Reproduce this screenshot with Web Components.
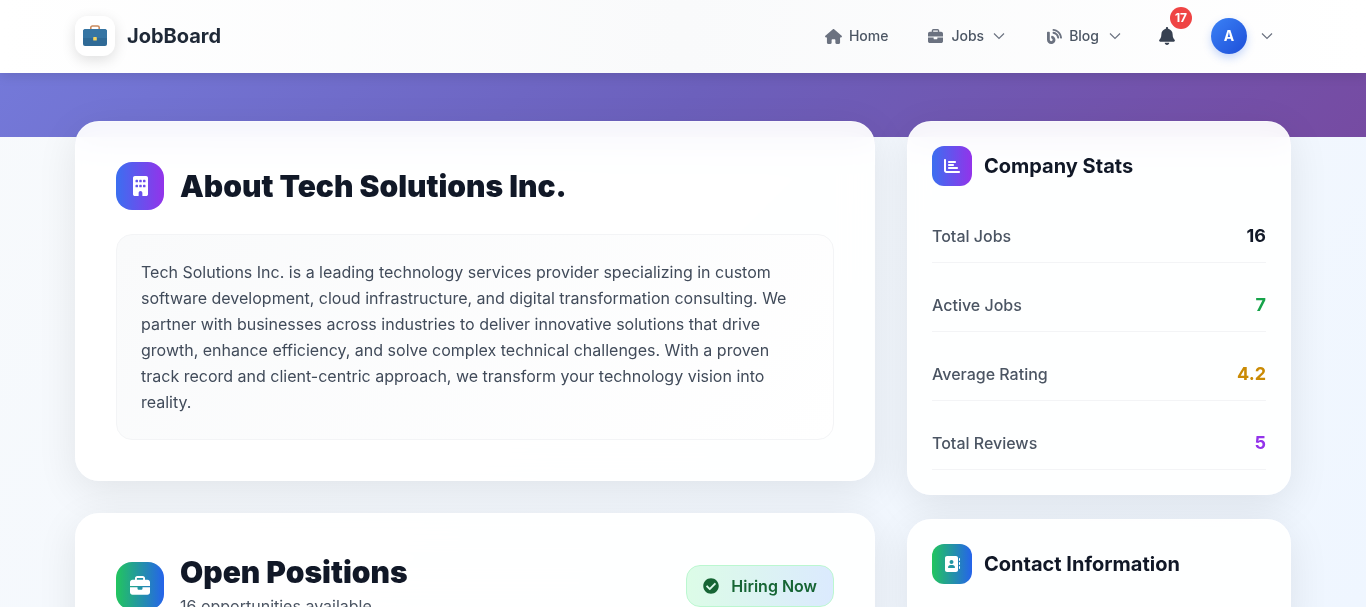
<!doctype html>
<html lang="en">
<head>
<meta charset="utf-8">
<title>About Tech Solutions Inc.</title>
<style>
  html, body { margin: 0; padding: 0; }
  html { height: 607px; overflow: hidden; }
  body {
    font-family: Inter, "Liberation Sans", sans-serif;
    background: linear-gradient(135deg, #f8fafc 0%, #eff6ff 100%);
    min-height: 607px;
    overflow: hidden;
  }
</style>
</head>
<body>
<top-nav></top-nav>
<hero-band></hero-band>
<page-main>
  <div slot="left">
    <info-card main>
      <card-head big icon="building" tone="purple" title-text="About Tech Solutions Inc."></card-head>
      <about-box>Tech Solutions Inc. is a leading technology services provider specializing in custom software development, cloud infrastructure, and digital transformation consulting. We partner with businesses across industries to deliver innovative solutions that drive growth, enhance efficiency, and solve complex technical challenges. With a proven track record and client-centric approach, we transform your technology vision into reality.</about-box>
    </info-card>
    <info-card main class="positions">
      <positions-head></positions-head>
    </info-card>
  </div>
  <div slot="right">
    <info-card>
      <card-head icon="chart" tone="purple" title-text="Company Stats"></card-head>
      <stat-row label="Total Jobs" value="16" color="#111827"></stat-row>
      <stat-row label="Active Jobs" value="7" color="#16a34a"></stat-row>
      <stat-row label="Average Rating" value="4.2" color="#ca8a04"></stat-row>
      <stat-row label="Total Reviews" value="5" color="#9333ea"></stat-row>
    </info-card>
    <info-card>
      <card-head icon="contact" tone="green" title-text="Contact Information"></card-head>
    </info-card>
  </div>
</page-main>

<script>
// font-awesome shapes, copied out as plain paths
const ICONS = {
  home: ['0 0 576 512', 'M575.8 255.5c0 18-15 32.1-32 32.1h-32l.7 160.2c0 2.7-.2 5.4-.5 8.1V472c0 22.1-17.9 40-40 40H456c-1.1 0-2.2 0-3.3-.1c-1.4 .1-2.8 .1-4.2 .1H416 392c-22.1 0-40-17.9-40-40V448 384c0-17.7-14.3-32-32-32H256c-17.7 0-32 14.3-32 32v64 24c0 22.1-17.9 40-40 40H160 128.1c-1.5 0-3-.1-4.5-.2c-1.2 .1-2.4 .2-3.6 .2H104c-22.1 0-40-17.9-40-40V360c0-.9 0-1.9 .1-2.8V287.6H32c-18 0-32-14-32-32.1c0-9 3-17 10-24L266.4 8c7-7 15-8 22-8s15 2 21 7L564.8 231.5c8 7 12 15 11 24z'],
  briefcase: ['0 0 512 512', 'M184 48H328c4.4 0 8 3.6 8 8V96H176V56c0-4.4 3.6-8 8-8zm-56 8V96H64C28.7 96 0 124.7 0 160v96H192 320 512V160c0-35.3-28.7-64-64-64H384V56c0-30.9-25.1-56-56-56H184c-30.9 0-56 25.1-56 56zM512 288H320v32c0 17.7-14.3 32-32 32H224c-17.7 0-32-14.3-32-32V288H0V416c0 35.3 28.7 64 64 64H448c35.3 0 64-28.7 64-64V288z'],
  blog: ['0 0 512 512', 'M172.2 226.8c-14.6-2.9-28.2 8.9-28.2 23.8V301c0 10.2 7.1 18.4 16.7 22 18.2 6.8 31.3 24.4 31.3 45 0 26.5-21.5 48-48 48s-48-21.5-48-48V120c0-13.3-10.7-24-24-24H24c-13.3 0-24 10.7-24 24v248c0 89.5 82.1 160.2 175 140.7 54.4-11.4 98.3-55.4 109.7-109.7 17.4-82.9-37-157.2-112.5-172.2zM209 0c-9.2-.5-17 6.8-17 16v31.6c0 8.5 6.6 15.5 15 15.9 129.4 7 233.4 112 240.9 241.5.5 8.4 7.5 15 15.9 15h32.1c9.2 0 16.5-7.8 16-17C503.4 139.8 372.2 8.6 209 0zm.3 96c-9.3-.7-17.3 6.7-17.3 16.1v32.1c0 8.4 6.5 15.3 14.8 15.9 76.8 6.3 138 68.2 144.9 145.2.8 8.3 7.6 14.7 15.9 14.7h32.2c9.3 0 16.8-8 16.1-17.3-8.4-110.1-96.5-198.2-206.6-206.7z'],
  bell: ['0 0 448 512', 'M224 512c35.32 0 63.97-28.65 63.97-64H160.03c0 35.35 28.65 64 63.97 64zm215.39-149.71c-19.32-20.76-55.47-51.99-55.47-154.29 0-77.7-54.48-139.9-127.94-155.16V32c0-17.67-14.32-32-31.98-32s-31.98 14.33-31.98 32v20.84C118.56 68.1 64.08 130.3 64.08 208c0 102.3-36.15 133.53-55.47 154.29-6 6.45-8.66 14.16-8.61 21.71.11 16.4 12.98 32 32.1 32h383.8c19.12 0 32-15.6 32.1-32 .05-7.55-2.61-15.27-8.61-21.71z'],
  check: ['0 0 512 512', 'M504 256c0 136.967-111.033 248-248 248S8 392.967 8 256 119.033 8 256 8s248 111.033 248 248zM227.314 387.314l184-184c6.248-6.248 6.248-16.379 0-22.627l-22.627-22.627c-6.248-6.249-16.379-6.249-22.628 0L216 308.118l-70.059-70.059c-6.248-6.248-16.379-6.248-22.628 0l-22.627 22.627c-6.248 6.248-6.248 16.379 0 22.627l104 104c6.249 6.249 16.379 6.249 22.628.001z'],
  building: ['0 0 384 512', 'M48 0C21.5 0 0 21.5 0 48V464c0 26.5 21.5 48 48 48h96V432c0-26.5 21.5-48 48-48s48 21.5 48 48v80h96c26.5 0 48-21.5 48-48V48c0-26.5-21.5-48-48-48H48zM64 240c0-8.8 7.2-16 16-16h32c8.8 0 16 7.2 16 16v32c0 8.8-7.2 16-16 16H80c-8.8 0-16-7.2-16-16V240zm112-16h32c8.8 0 16 7.2 16 16v32c0 8.8-7.2 16-16 16H176c-8.8 0-16-7.2-16-16V240c0-8.8 7.2-16 16-16zm80 16c0-8.8 7.2-16 16-16h32c8.8 0 16 7.2 16 16v32c0 8.8-7.2 16-16 16H272c-8.8 0-16-7.2-16-16V240zM80 96h32c8.8 0 16 7.2 16 16v32c0 8.8-7.2 16-16 16H80c-8.8 0-16-7.2-16-16V112c0-8.8 7.2-16 16-16zm80 16c0-8.8 7.2-16 16-16h32c8.8 0 16 7.2 16 16v32c0 8.8-7.2 16-16 16H176c-8.8 0-16-7.2-16-16V112zM272 96h32c8.8 0 16 7.2 16 16v32c0 8.8-7.2 16-16 16H272c-8.8 0-16-7.2-16-16V112c0-8.8 7.2-16 16-16z'],
  chart: ['0 0 512 512', 'M32 32c17.7 0 32 14.3 32 32V400c0 8.8 7.2 16 16 16H480c17.7 0 32 14.3 32 32s-14.3 32-32 32H80c-44.2 0-80-35.8-80-80V64C0 46.3 14.3 32 32 32zm96 96c0-17.7 14.3-32 32-32l192 0c17.7 0 32 14.3 32 32s-14.3 32-32 32l-192 0c-17.7 0-32-14.3-32-32zm32 64H288c17.7 0 32 14.3 32 32s-14.3 32-32 32H160c-17.7 0-32-14.3-32-32s14.3-32 32-32zm0 96H416c17.7 0 32 14.3 32 32s-14.3 32-32 32H160c-17.7 0-32-14.3-32-32s14.3-32 32-32z'],
  contact: ['0 0 512 512', 'M96 0C60.7 0 32 28.7 32 64V448c0 35.3 28.7 64 64 64H384c35.3 0 64-28.7 64-64V64c0-35.3-28.7-64-64-64H96zM208 288h64c44.2 0 80 35.8 80 80c0 8.8-7.2 16-16 16H144c-8.8 0-16-7.2-16-16c0-44.2 35.8-80 80-80zm-32-96a64 64 0 1 1 128 0 64 64 0 1 1 -128 0zM512 80c0-8.8-7.2-16-16-16s-16 7.2-16 16v64c0 8.8 7.2 16 16 16s16-7.2 16-16V80zM496 192c-8.8 0-16 7.2-16 16v64c0 8.8 7.2 16 16 16s16-7.2 16-16V208c0-8.8-7.2-16-16-16zm16 144c0-8.8-7.2-16-16-16s-16 7.2-16 16v64c0 8.8 7.2 16 16 16s16-7.2 16-16V336z']
};
const svg = (name, w, h, fill) =>
  `<svg width="${w}" height="${h}" viewBox="${ICONS[name][0]}" fill="${fill}" fill-rule="evenodd" aria-hidden="true"><path d="${ICONS[name][1]}"/></svg>`;
const chevron = `<svg width="12" height="12" viewBox="0 0 12 12" fill="none" stroke="#6b7280" stroke-width="1.2"><path d="M1 3.5 6 8.5 11 3.5"/></svg>`;

class TopNav extends HTMLElement {
  constructor() {
    super();
    this.attachShadow({ mode: 'open' }).innerHTML = `
      <style>
        :host { display: block; height: 73px; background: linear-gradient(90deg, #fff 0%, #f9fafb 50%, #fff 100%); position: relative; z-index: 5; box-shadow: 0 2px 12px rgba(0,0,0,.12); }
        .wrap { height: 72px; margin: 0 75px; display: flex; align-items: center; justify-content: space-between; }
        .brand { display: flex; align-items: center; gap: 12px; }
        .logo { width: 40px; height: 40px; border-radius: 12px; background: #fff; box-shadow: 0 4px 14px rgba(0,0,0,.13); display: flex; align-items: center; justify-content: center; }
        .name { font-size: 20px; font-weight: 700; line-height: 28px; color: #1f2937; }
        .links { display: flex; align-items: center; padding-right: 18px; }
        .home { margin-right: 40px; }
        .jobs { margin-right: 42px; }
        .blog { margin-right: 38px; }
        .bell { position: relative; width: 16px; height: 18px; margin-right: 36px; display: flex; }
        .count { position: absolute; left: 11px; top: -20px; width: 22px; height: 22px; border-radius: 50%; background: #ef4444; color: #fff; font-size: 12px; font-weight: 700; line-height: 22px; text-align: center; }
        .avatar { width: 36px; height: 36px; border-radius: 50%; background: linear-gradient(135deg, #3b82f6, #1d4ed8); color: #fff; font-size: 14px; font-weight: 700; line-height: 36px; text-align: center; box-shadow: 0 4px 8px rgba(37,99,235,.25); margin-right: 14px; }
        .chev { display: flex; }
      </style>
      <div class="wrap">
        <div class="brand">
          <div class="logo">
            <svg width="26" height="24" viewBox="0 0 26 24">
              <path d="M8.8 6V3.6C8.8 2.7 9.5 2 10.4 2h5.2c.9 0 1.6.7 1.6 1.6V6" fill="none" stroke="#c98a5e" stroke-width="1.6"/>
              <path d="M1 7.5C1 6 2 5 3.5 5h19C24 5 25 6 25 7.5V20a2 2 0 0 1-2 2H3a2 2 0 0 1-2-2z" fill="#2f6a96"/>
              <path d="M1 14h24V7.5C25 6 24 5 22.5 5h-19C2 5 1 6 1 7.5z" fill="#3675a3"/>
              <rect x="11.2" y="13" width="3.6" height="3.6" rx=".7" fill="#f5d45e"/>
            </svg>
          </div>
          <span class="name">JobBoard</span>
        </div>
        <div class="links">
          <nav-link class="home" icon="home" iw="17" igap="7">Home</nav-link>
          <nav-link class="jobs" icon="briefcase" iw="15" igap="8" gap="9" drop>Jobs</nav-link>
          <nav-link class="blog" icon="blog" iw="15" igap="7" drop>Blog</nav-link>
          <div class="bell">${svg('bell', 16, 18, '#374151')}<span class="count">17</span></div>
          <div class="avatar">A</div>
          <span class="chev">${chevron}</span>
        </div>
      </div>`;
  }
}
customElements.define('top-nav', TopNav);

class NavLink extends HTMLElement {
  constructor() {
    super();
    const drop = this.hasAttribute('drop');
    const iw = this.getAttribute('iw') || 16;
    const gap = this.getAttribute('gap') || 10;
    this.attachShadow({ mode: 'open' }).innerHTML = `
      <style>
        :host { display: inline-flex; align-items: center; font-size: 14px; font-weight: 500; line-height: 20px; color: #4b5563; }
        .ic { display: flex; margin-right: ${this.getAttribute('igap')}px; }
        .chev { display: flex; margin-left: ${gap}px; }
      </style>
      <span class="ic">${svg(this.getAttribute('icon'), iw, 15, '#6b7280')}</span>
      <slot></slot>
      ${drop ? `<span class="chev">${chevron}</span>` : ''}`;
  }
}
customElements.define('nav-link', NavLink);

class HeroBand extends HTMLElement {
  constructor() {
    super();
    this.attachShadow({ mode: 'open' }).innerHTML = `
      <style>:host { display: block; height: 64px; background: linear-gradient(135deg, #7479d9 0%, #6c60bc 50%, #764ba2 100%); }</style>`;
  }
}
customElements.define('hero-band', HeroBand);

class PageMain extends HTMLElement {
  constructor() {
    super();
    this.attachShadow({ mode: 'open' }).innerHTML = `
      <style>
        :host { display: grid; grid-template-columns: 800px 384px; gap: 32px; margin: -16px 75px 0; position: relative; z-index: 1; }
        ::slotted(div) { display: flex; flex-direction: column; }
        ::slotted([slot=left]) { gap: 32px; }
        ::slotted([slot=right]) { gap: 24px; }
      </style>
      <slot name="left"></slot>
      <slot name="right"></slot>`;
  }
}
customElements.define('page-main', PageMain);

class InfoCard extends HTMLElement {
  constructor() {
    super();
    this.attachShadow({ mode: 'open' }).innerHTML = `
      <style>
        :host { display: block; box-sizing: border-box; padding: 24px; border-radius: 24px; background: rgba(255,255,255,.92); backdrop-filter: blur(16px); border: 1px solid rgba(255,255,255,.4); box-shadow: 0 10px 40px rgba(0,0,0,.085); }
        :host([main]) { padding: 40px; }
        :host(.positions) { height: 300px; }
      </style>
      <slot></slot>`;
  }
}
customElements.define('info-card', InfoCard);

class IconTile extends HTMLElement {
  constructor() {
    super();
    const tone = this.getAttribute('tone');
    const size = +this.getAttribute('size');
    const bg = tone === 'green' ? 'linear-gradient(90deg, #22c55e, #2563eb)' : 'linear-gradient(90deg, #3b6ff0, #9333ea)';
    const sizes = { building: [15, 20], chart: [16, 16], contact: [16, 16], briefcase: [20, 20] };
    const name = this.getAttribute('icon');
    this.attachShadow({ mode: 'open' }).innerHTML = `
      <style>
        :host { display: flex; flex: none; align-items: center; justify-content: center; width: ${size}px; height: ${size}px; border-radius: ${size === 48 ? 16 : 12}px; background: ${bg}; }
      </style>
      ${svg(name, sizes[name][0], sizes[name][1], '#fff')}`;
  }
}
customElements.define('icon-tile', IconTile);

class CardHead extends HTMLElement {
  constructor() {
    super();
    const big = this.hasAttribute('big');
    this.attachShadow({ mode: 'open' }).innerHTML = `
      <style>
        :host { display: flex; align-items: center; gap: ${big ? 16 : 12}px; margin-bottom: 24px; }
        h2 { margin: 0; color: #111827; font-size: ${big ? 30 : 20}px; font-weight: ${big ? 900 : 700}; line-height: ${big ? 36 : 28}px; }
      </style>
      <icon-tile size="${big ? 48 : 40}" icon="${this.getAttribute('icon')}" tone="${this.getAttribute('tone')}"></icon-tile>
      <h2>${this.getAttribute('title-text')}</h2>`;
  }
}
customElements.define('card-head', CardHead);

class AboutBox extends HTMLElement {
  constructor() {
    super();
    this.attachShadow({ mode: 'open' }).innerHTML = `
      <style>
        :host { display: block; padding: 24px; border: 1px solid #f3f4f6; border-radius: 16px; background: linear-gradient(135deg, #f9fafb, #fff); color: #414b5a; font-size: 16px; line-height: 26px; }
      </style>
      <slot></slot>`;
  }
}
customElements.define('about-box', AboutBox);

class StatRow extends HTMLElement {
  constructor() {
    super();
    this.attachShadow({ mode: 'open' }).innerHTML = `
      <style>
        :host { display: flex; justify-content: space-between; align-items: center; padding: 12px 0; border-bottom: 1px solid #f3f4f6; margin-bottom: 16px; }
        :host(:last-child) { margin-bottom: 0; }
        .l { color: #4b5563; font-size: 16px; font-weight: 500; line-height: 28px; }
        .v { font-size: 18px; font-weight: 700; line-height: 28px; }
      </style>
      <span class="l">${this.getAttribute('label')}</span>
      <span class="v" style="color:${this.getAttribute('color')}">${this.getAttribute('value')}</span>`;
  }
}
customElements.define('stat-row', StatRow);

class PositionsHead extends HTMLElement {
  constructor() {
    super();
    this.attachShadow({ mode: 'open' }).innerHTML = `
      <style>
        :host { display: flex; align-items: center; justify-content: space-between; }
        .left { display: flex; align-items: center; gap: 16px; }
        h2 { margin: 0; color: #111827; font-size: 30px; font-weight: 900; line-height: 36px; }
        p { margin: 4px 0 0; color: #4b5563; font-size: 16px; line-height: 24px; }
        .badge { display: flex; align-items: center; gap: 12px; box-sizing: border-box; height: 42px; padding: 0 16px; border: 1px solid #bbf7d0; border-radius: 14px; background: linear-gradient(90deg, #dcfce7, #dbeafe); color: #166534; font-size: 16px; font-weight: 600; }
        .badge svg { display: block; }
      </style>
      <div class="left">
        <icon-tile size="48" icon="briefcase" tone="green"></icon-tile>
        <div><h2>Open Positions</h2><p>16 opportunities available</p></div>
      </div>
      <div class="badge">${svg('check', 16, 16, '#166534')}<span>Hiring Now</span></div>`;
  }
}
customElements.define('positions-head', PositionsHead);
</script>
</body>
</html>
